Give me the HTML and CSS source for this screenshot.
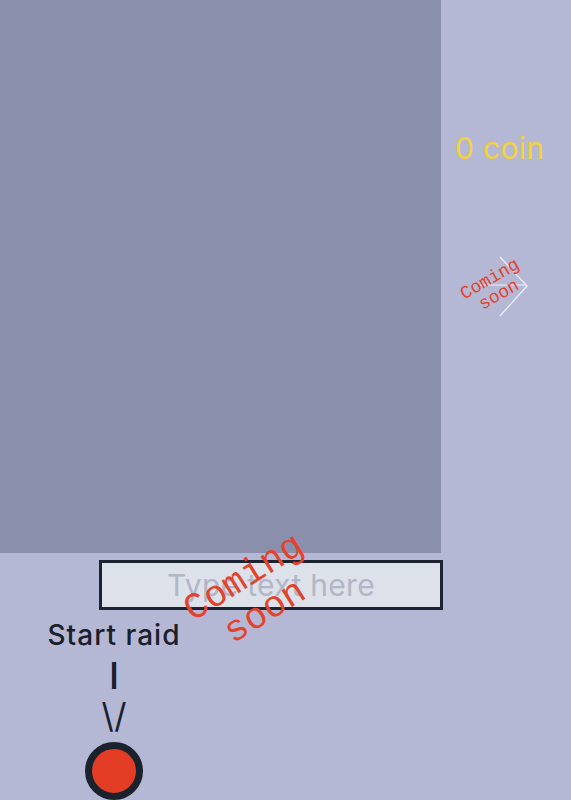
FILE: index.html
```html
<!DOCTYPE html>
<html>
<head>
<meta charset="utf-8">
<link rel="stylesheet" href="styles.css">
</head>
<body>
<div class="top">
  <div class="board"></div>
  <div class="side">
    <div class="coin">0 coin</div>
    <div class="next">
      <svg class="arrow" width="60" height="62" viewBox="0 0 60 62">
        <path d="M30 1 L57 30 L30 60 M10 29 L57 29" fill="none" stroke="#eef0f8" stroke-width="1.2"/>
      </svg>
      <span class="soon small">Coming<br>soon</span>
    </div>
  </div>
</div>
<div class="inputrow">
  <div class="inputbox">
    <span class="placeholder">Type text here</span>
    <span class="soon big">Coming<br>soon</span>
  </div>
</div>
<div class="raid">
  <div class="label">Start raid</div>
  <div class="bar">I</div>
  <div class="vee">\/</div>
  <div class="dot"></div>
</div>
</body>
</html>
```
FILE: styles.css
```css
html, body {
  margin: 0;
  padding: 0;
}
body {
  background: #b5b8d5;
  width: 571px;
  height: 800px;
  overflow: hidden;
  font-family: "Inter", "Open Sans", sans-serif;
}
.top {
  display: flex;
  height: 553px;
}
.board {
  width: 441px;
  height: 553px;
  background: #8a8fab;
}
.side {
  flex: 1;
  display: flex;
  flex-direction: column;
  align-items: flex-start;
}
.coin {
  margin-top: 129px;
  margin-left: 14px;
  color: #f3d13e;
  font-size: 30px;
  line-height: 38px;
  letter-spacing: 0.3px;
}
.next {
  position: relative;
  width: 60px;
  height: 62px;
  margin-top: 89px;
  margin-left: 29px;
}
.arrow {
  display: block;
}
.soon {
  position: absolute;
  font-family: "Liberation Mono", "DejaVu Sans Mono", monospace;
  color: #e2432b;
  text-align: center;
  white-space: nowrap;
}
.small {
  font-size: 18px;
  line-height: 18px;
  left: -8px;
  top: 13px;
  transform: rotate(-30deg);
}
.inputrow {
  padding-top: 7px;
  padding-left: 99px;
}
.inputbox {
  position: relative;
  width: 338px;
  height: 44px;
  border: 3px solid #1b2430;
  background: #dde1ea;
  display: flex;
  align-items: center;
  justify-content: center;
}
.placeholder {
  color: #b2b6c6;
  font-size: 30px;
  letter-spacing: 0.3px;
}
.big {
  font-size: 37px;
  line-height: 40px;
  left: 86px;
  top: -8px;
  transform: rotate(-32deg);
}
.raid {
  width: 228px;
  display: flex;
  flex-direction: column;
  align-items: center;
  color: #19202c;
  font-weight: 500;
}
.label {
  font-size: 28px;
  line-height: 34px;
  margin-top: 8px;
  letter-spacing: 1px;
}
.bar {
  font-size: 37px;
  line-height: 40px;
  margin-top: 4px;
}
.vee {
  font-size: 34px;
  line-height: 40px;
  font-weight: 400;
  letter-spacing: 0;
}
.dot {
  margin-top: 6px;
  width: 44px;
  height: 44px;
  border-radius: 50%;
  background: #e33d25;
  border: 7px solid #1a232d;
}
```
